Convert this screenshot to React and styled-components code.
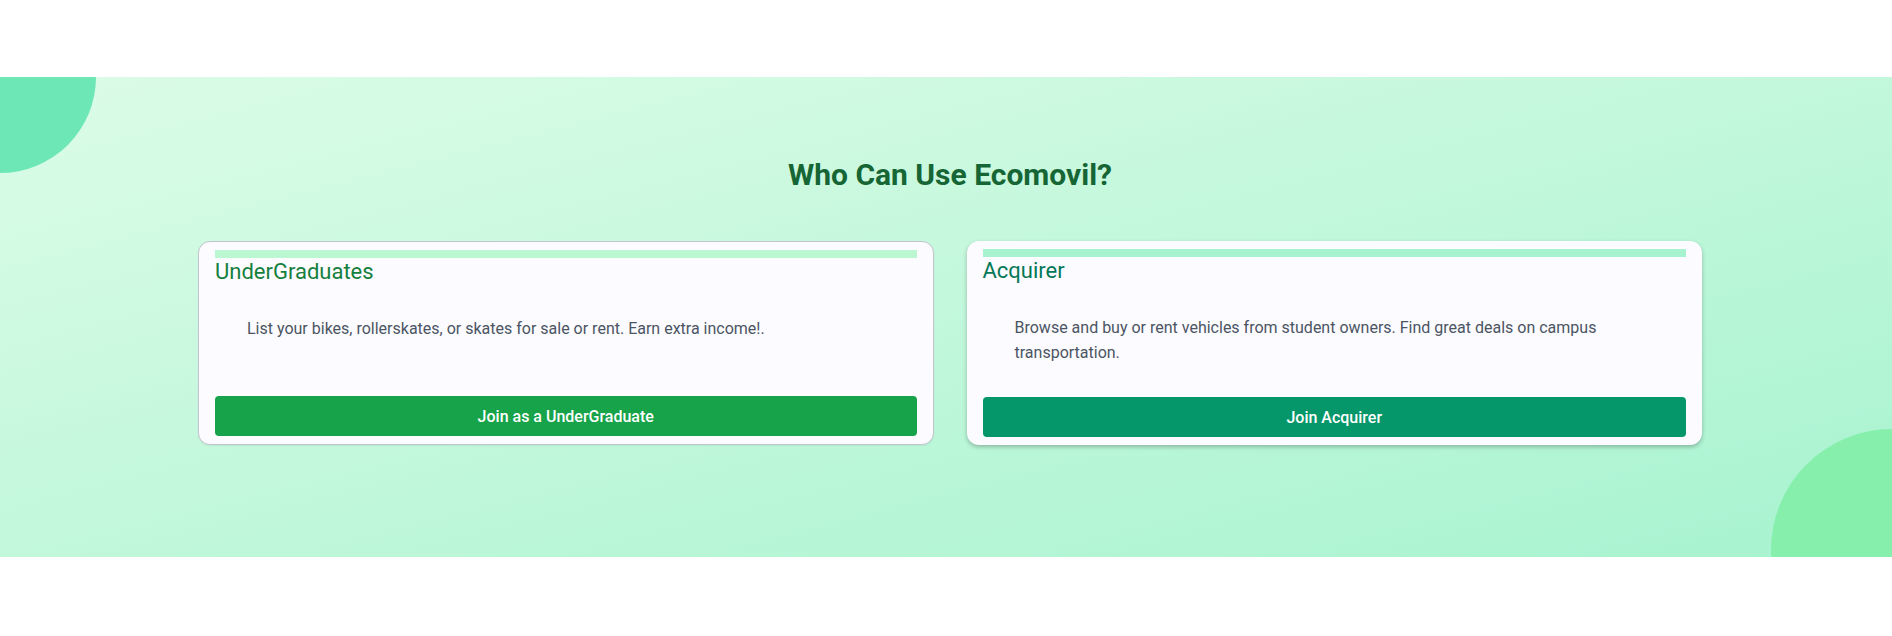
import React from 'react';
import styled, { createGlobalStyle } from 'styled-components';

const GlobalStyle = createGlobalStyle`
    body {
        margin: 0;
        background: #ffffff;
        font-family: Roboto, "Noto Sans", Arial, sans-serif;
    }
    * {
        box-sizing: border-box;
    }
`;

const roles = [
    {
        title: 'UnderGraduates',
        text: 'List your bikes, rollerskates, or skates for sale or rent. Earn extra income!.',
        button: 'Join as a UnderGraduate',
        variant: 'green',
    },
    {
        title: 'Acquirer',
        text: 'Browse and buy or rent vehicles from student owners. Find great deals on campus transportation.',
        button: 'Join Acquirer',
        variant: 'emerald',
    },
];

const palette = {
    green: { stripe: '#bbf7d0', title: '#15803d', button: '#16a34a' },
    emerald: { stripe: '#a7f3d0', title: '#047857', button: '#059669' },
};

export default function App() {
    return (
        <Page>
            <GlobalStyle />
            <Section>
                <Blob $corner="topLeft" />
                <Blob $corner="bottomRight" />
                <Container>
                    <Heading>Who Can Use Ecomovil?</Heading>
                    <CardGrid>
                        {roles.map(role => (
                            <Card key={role.title} $variant={role.variant}>
                                <Stripe $variant={role.variant} />
                                <CardTitle $variant={role.variant}>{role.title}</CardTitle>
                                <CardText>{role.text}</CardText>
                                <JoinButton $variant={role.variant}>{role.button}</JoinButton>
                            </Card>
                        ))}
                    </CardGrid>
                </Container>
            </Section>
        </Page>
    );
}

const Page = styled.div`
    padding-top: 77px;
    padding-bottom: 79px;
`;

const Section = styled.section`
    position: relative;
    overflow: hidden;
    height: 480px;
    padding-top: 80px;
    background: linear-gradient(to bottom right, #dcfce7, #a7f3d0);
`;

const Blob = styled.div`
    position: absolute;
    border-radius: 50%;
    ${p => p.$corner === 'topLeft'
        ? `
        width: 192px;
        height: 192px;
        top: -96px;
        left: -96px;
        background: #6ee7b7;
    `
        : `
        width: 242px;
        height: 242px;
        bottom: -114px;
        right: -121px;
        background: #86efac;
    `}
`;

const Container = styled.div`
    position: relative;
    margin: 0 190px 0 198px;
`;

const Heading = styled.h2`
    margin: 0;
    text-align: center;
    font-size: 30px;
    line-height: 36px;
    font-weight: 700;
    color: #166534;
`;

const CardGrid = styled.div`
    display: grid;
    grid-template-columns: 1fr 1fr;
    gap: 33px;
    margin-top: 48px;
`;

const Card = styled.div`
    display: flex;
    flex-direction: column;
    padding: 8px 16px;
    background: #fcfbff;
    border-radius: 12px;
    border: ${p => (p.$variant === 'green' ? '1px solid #c4c4cc' : 'none')};
    box-shadow: ${p => (p.$variant === 'green'
        ? '0 1px 2px rgba(0, 0, 0, 0.06)'
        : '0 2px 4px rgba(0, 0, 0, 0.25)')};
`;

const Stripe = styled.div`
    height: 8px;
    background: ${p => palette[p.$variant].stripe};
`;

const CardTitle = styled.h3`
    margin: 0;
    font-size: 22px;
    line-height: 28px;
    font-weight: 400;
    color: ${p => palette[p.$variant].title};
`;

const CardText = styled.p`
    margin: 30px 0 32px;
    padding: 0 32px;
    font-size: 16px;
    line-height: 25px;
    color: #4b5563;
`;

const JoinButton = styled.button`
    margin-top: auto;
    height: 40px;
    border: none;
    border-radius: 4px;
    background: ${p => palette[p.$variant].button};
    color: #ffffff;
    font-family: Roboto, "Noto Sans", Arial, sans-serif;
    font-size: 16px;
    font-weight: 500;
    cursor: pointer;
`;
